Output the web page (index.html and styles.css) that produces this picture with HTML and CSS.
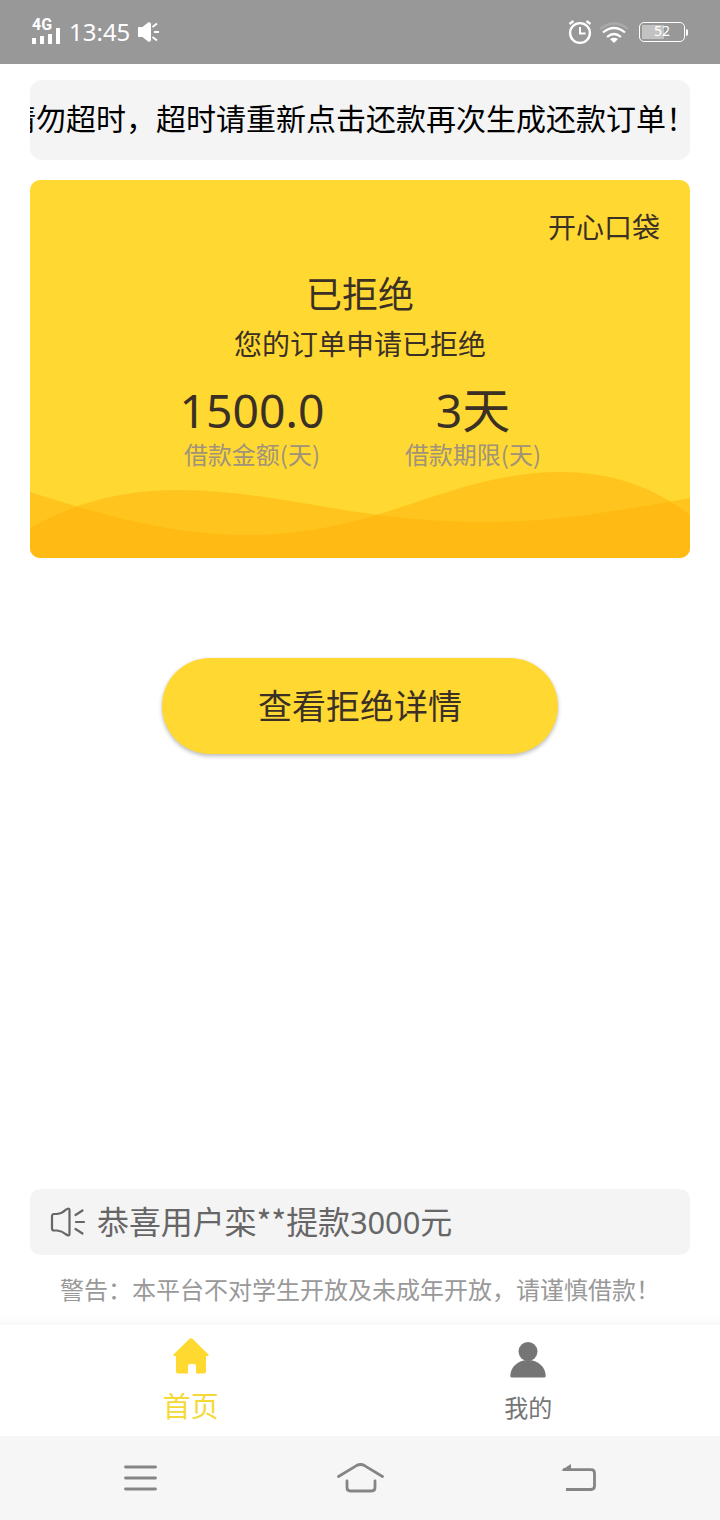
FILE: index.html
```html
<!DOCTYPE html>
<html lang="zh-CN">
<head>
<meta charset="utf-8">
<title>开心口袋</title>
<link rel="stylesheet" href="styles.css">
</head>
<body>
<div class="app">
  <header class="status">
    <div class="status-left">
      <div class="signal">
        <span class="signal-type">4G</span>
        <svg width="28" height="16" viewBox="0 0 28 16" fill="#fff"><path d="M0 10h4v6H0zM8 8h4v8H8zM16 6h4v10h-4zM24 0h4v16h-4z"/></svg>
      </div>
      <span class="clock">13:45</span>
      <svg class="mute" width="22" height="22" viewBox="0 0 22 22"><path d="M0 6h4.500L10 1.500Q13 .5 13 3v16q0 2.500-3 1.500L4.500 16H0z" fill="#fff"/><path d="M14.500 6l4.500-3.500M16 11h5M14.500 16l4.500 3.500" stroke="#fff" stroke-width="2" fill="none"/></svg>
    </div>
    <div class="status-right">
      <svg width="24" height="26" viewBox="0 0 24 26" fill="none" stroke="#fff"><circle cx="12" cy="14" r="9.900" stroke-width="2.400"/><path d="M12 8v6.500h5.500" stroke-width="2"/><path d="M1.500 5l4-3M22.500 5l-4-3" stroke-width="2.200"/></svg>
      <svg class="wifi" width="30" height="22" viewBox="0 0 30 22" fill="none" stroke="#fff" stroke-width="2.200"><path d="M1 7Q15-4 29 7" opacity=".18"/><path d="M4 10.500Q15 1.500 26 10.500M8 15Q15 9 22 15"/><path d="M11 17q4-2.500 8 0l-4 4z" fill="#fff" stroke="none"/></svg>
      <div class="battery"><div class="battery-shell"><span class="battery-value">52</span></div><i class="battery-tip"></i></div>
    </div>
  </header>

  <main class="content">
    <div class="marquee"><span class="marquee-text">请勿超时，超时请重新点击还款再次生成还款订单！</span></div>

    <section class="card">
      <svg class="waves" width="660" height="90" viewBox="0 0 660 90" fill="#ffb10a"><path fill-opacity=".5" d="M0 24C70 46 140 67 218 67C350 67 420 4 530 4C590 4 630 24 660 47V90H0z"/><path fill-opacity=".5" d="M0 60C45 35 90 22 150 22C245 22 325 54 455 54C535 54 600 40 660 30V90H0z"/></svg>
      <div class="brand">开心口袋</div>
      <h1 class="state">已拒绝</h1>
      <p class="state-note">您的订单申请已拒绝</p>
      <div class="figures">
        <div class="figure"><b class="figure-value"><span class="digits">1500.0</span></b><span class="figure-label">借款金额(天)</span></div>
        <div class="figure"><b class="figure-value"><span class="digits">3</span>天</b><span class="figure-label">借款期限(天)</span></div>
      </div>
    </section>

    <button class="detail">查看拒绝详情</button>

    <div class="notice">
      <svg width="36" height="32" viewBox="0 0 36 32" fill="none" stroke="#666" stroke-width="2.200" stroke-linejoin="round" stroke-linecap="round"><path d="M4 8h3Q12 7.500 15.500 4Q19.500 1 19.500 4v24q0 3-4 0Q12 25 7 24.500H4Q2 24.500 2 22.500v-12Q2 8 4 8z"/><path d="M25.500 9l7-4.500M26 16h8M25.500 23l7 4.500"/></svg>
      <span class="notice-text">恭喜用户栾**提款<span class="digits">3000</span>元</span>
    </div>
    <p class="warning">警告：本平台不对学生开放及未成年开放，请谨慎借款！</p>
  </main>

  <nav class="tabs">
    <div class="tab tab-active">
      <svg width="36" height="36" viewBox="0 0 36 36"><path d="M16 1.300q2-2 4 0L35.500 16.500q.8 1.500-1 1.500H33v15.500q0 2-2 2H23V28q0-2-2-2h-4q-2 0-2 2v7.500H5q-2 0-2-2V18H1.500q-1.800 0-1-1.500z" fill="#ffd92f"/></svg>
      <span>首页</span>
    </div>
    <div class="tab">
      <svg width="36" height="36" viewBox="0 0 36 36" fill="#757575"><circle cx="18" cy="9.500" r="9.500"/><path d="M.3 34C.3 25 8 18 18 18s17.700 7 17.700 16q0 1.600-1.600 1.600H1.900Q.3 35.600.3 34z"/></svg>
      <span>我的</span>
    </div>
  </nav>

  <footer class="sysnav">
    <svg width="34" height="28" viewBox="0 0 34 28" stroke="#858585" stroke-width="2.800" stroke-linecap="round"><path d="M1.500 3h30M1.500 14h30M1.500 25h30"/></svg>
    <svg width="48" height="32" viewBox="0 0 48 32" fill="none" stroke="#858585" stroke-width="2.800" stroke-linecap="round"><path d="M2.500 14.500L20.500 3.600q4-2.200 8 0L46.500 14.500"/><path d="M11 19v6.500q0 3.500 3.500 3.500h21q3.500 0 3.500-3.500V19"/></svg>
    <svg width="36" height="30" viewBox="0 0 36 30" fill="none" stroke="#858585" stroke-width="2.800"><path d="M2 6.600h28q3.500 0 3.500 3.500V23q0 3.500-3.500 3.500H5"/><path d="M0 7.500L10 1v6.500z" fill="#858585" stroke="none"/></svg>
  </footer>
</div>
</body>
</html>
```

FILE: styles.css
```css
* { box-sizing: border-box; }
body { margin: 0; background: #fff; color: #333; font-family: "Noto Sans CJK SC", "Noto Sans", sans-serif; }
svg { display: block; flex: none; }
h1, p { margin: 0; font-weight: 400; }
.app { width: 720px; height: 1520px; display: flex; flex-direction: column; overflow: hidden; }
.digits { font-family: "Noto Sans", sans-serif; font-size: .965em; line-height: 1; }

.status { height: 64px; flex: none; padding: 0 32px; background: #989898; color: #fff; display: flex; justify-content: space-between; align-items: center; }
.status-left, .status-right { display: flex; align-items: center; }
.signal { width: 28px; height: 26px; display: grid; margin-bottom: 2px; }
.signal > * { grid-area: 1 / 1; }
.signal svg { align-self: end; }
.signal-type { font: 700 16px/14px Roboto, sans-serif; margin-top: 0; }
.clock { font-family: "Noto Sans", sans-serif; font-size: 24px; line-height: 34px; margin: -1px 0 0 9px; font-weight: 400; }
.mute { margin-left: 8px; }
.wifi { margin: 2px 10px 0 7px; }
.battery { display: flex; align-items: center; }
.battery-shell { width: 46px; height: 20px; border: 1.500px solid #fff; border-radius: 5px; padding: 0 2px 2px; display: flex; background: linear-gradient(#c2c2c2, #c2c2c2) 2px 2px / 22px 14px no-repeat; justify-content: center; align-items: center; }
.battery-value { font-family: "Noto Sans", sans-serif; font-size: 14px; line-height: 16px; }
.battery-tip { width: 2px; height: 7px; margin-left: 1px; background: #fff; border-radius: 0 2px 2px 0; }

.content { flex: 1; padding: 16px 30px 0; display: flex; flex-direction: column; }
.marquee { height: 80px; flex: none; border-radius: 12px; background: #f4f4f4; overflow: hidden; color: #000; font-size: 30px; line-height: 75px; white-space: nowrap; }
.marquee-text { display: block; margin-left: -24px; }

.card { height: 378px; flex: none; margin-top: 20px; border-radius: 10px; background: #ffd932; overflow: hidden; position: relative; color: #3b3025; text-align: center; padding-top: 26px; }
.waves { position: absolute; left: 0; bottom: 0; }
.brand { font-size: 28px; line-height: 40px; text-align: right; padding-right: 30px; }
.state { font-size: 36px; line-height: 50px; margin-top: 21px; }
.state-note { font-size: 28px; line-height: 40px; margin-top: 6px; }
.figures { position: relative; display: grid; grid-template-columns: 221px 221px; justify-content: center; padding-left: 5px; margin-top: 16px; }
.figure { display: flex; flex-direction: column; }
.figure-value { font-size: 48px; line-height: 56px; height: 56px; font-weight: 400; }
.figure-label { font-size: 24px; line-height: 34px; margin-top: 2px; color: #a0937a; }

.detail { align-self: center; width: 396px; height: 96px; margin-top: 100px; border: 0; padding: 0 0 4px; border-radius: 48px; background: #ffd932; color: #3b3025; font-family: inherit; font-size: 34px; box-shadow: 0 2px 4px rgba(0, 0, 0, .28); }

.notice { height: 66px; margin-top: auto; border-radius: 10px; background: #f4f4f4; color: #666; display: flex; align-items: center; gap: 11px; padding-left: 20px; font-size: 32px; line-height: 46px; }
.notice-text { margin-top: -4px; letter-spacing: -.1px; }
.warning { font-size: 24px; line-height: 34px; color: #999; margin: 17px 0 9px 30px; white-space: nowrap; }
.content::after { content: ""; height: 10px; flex: none; margin: 0 -30px; background: linear-gradient(#fff, #f8f8f8); }

.tabs { height: 111px; flex: none; padding: 13px 23px 0 22px; display: flex; background: #fff; }
.tab { flex: 1; display: flex; flex-direction: column; align-items: center; color: #757575; font-size: 24px; line-height: 34px; padding-top: 4px; }
.tab span { margin-top: 12px; }
.tab-active { color: #f5d936; font-size: 28px; line-height: 40px; padding-top: 0; }
.tab-active span { margin-top: 11px; }

.sysnav { height: 84px; flex: none; background: #f6f6f6; display: flex; justify-content: space-between; align-items: center; padding: 0 123px 0 124px; }
```
